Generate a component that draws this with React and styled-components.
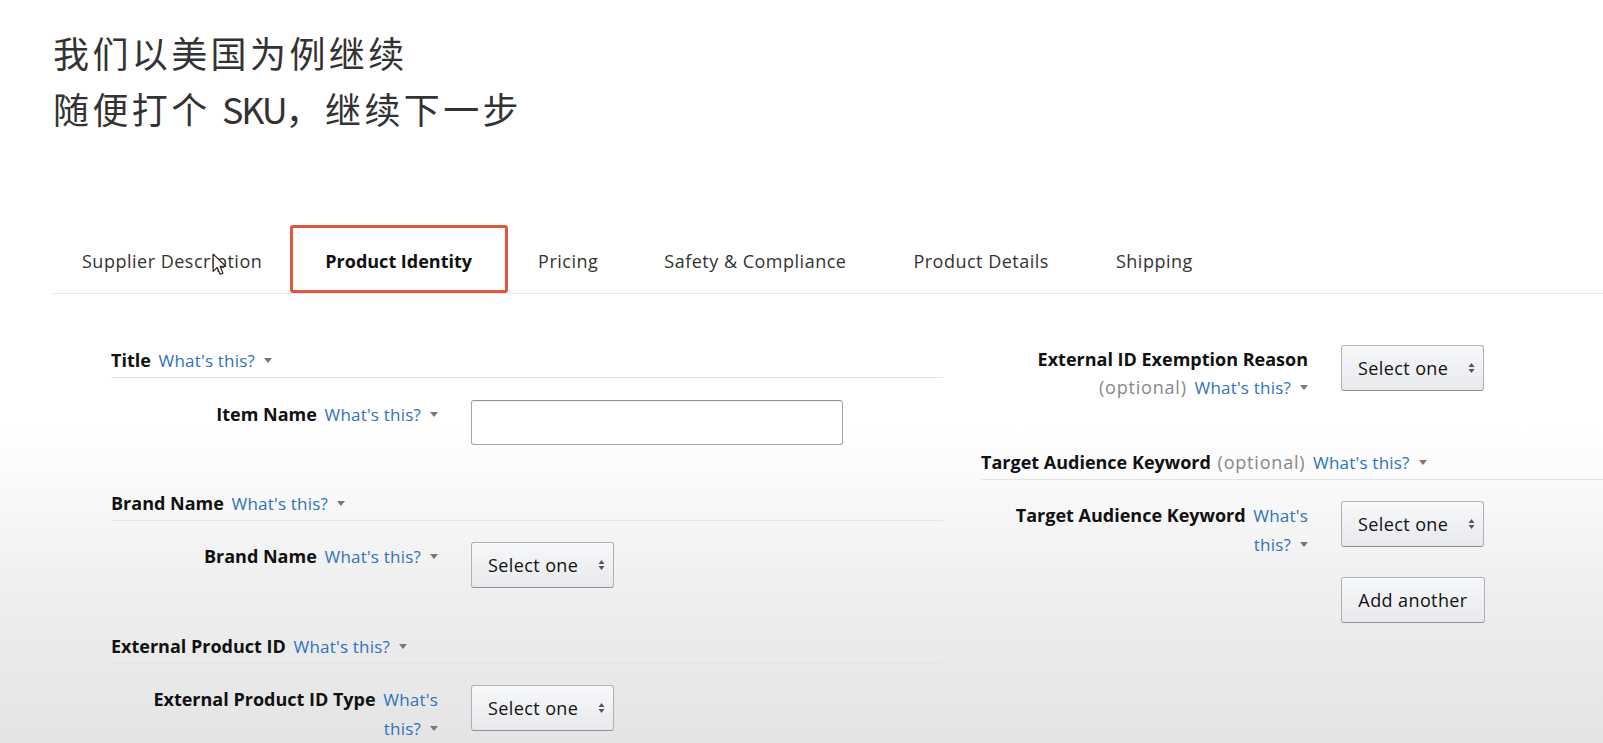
import React from 'react';
import styled, { createGlobalStyle } from 'styled-components';

const GlobalStyle = createGlobalStyle`
  html, body {
    margin: 0;
    padding: 0;
  }
  body {
    min-height: 743px;
    font-family: "Open Sans", "Liberation Sans", sans-serif;
    color: #222;
    background: linear-gradient(180deg, #ffffff 0px, #ffffff 430px, #eeeeee 600px, #e4e4e4 743px);
    overflow: hidden;
  }
`;

const Page = styled.div`
  position: relative;
  min-height: 743px;
  padding-left: 53px;
`;

const Caption = styled.div`
  padding-top: 24px;
  font-family: "Noto Sans CJK SC", "Noto Sans", sans-serif;
  font-size: 36px;
  line-height: 56px;
  letter-spacing: 3.4px;
  color: #333;
`;

const Latin = styled.span`
  letter-spacing: -2.2px;
`;

const TabBar = styled.div`
  display: flex;
  margin-top: 89px;
  border-bottom: 1px solid #e6e6e6;
`;

const Tab = styled.div`
  height: 68px;
  display: flex;
  align-items: center;
  padding: 4px ${(p) => p.$pad[1]}px 0 ${(p) => p.$pad[0]}px;
  border: 3px solid ${(p) => (p.$active ? '#e2563c' : 'transparent')};
  border-radius: 3px;
  box-sizing: border-box;
  font-size: 18px;
  font-weight: ${(p) => (p.$active ? 700 : 400)};
  color: ${(p) => (p.$active ? '#111' : '#333')};
  letter-spacing: ${(p) => (p.$active ? 0 : 0.5)}px;
  white-space: nowrap;
`;

const Form = styled.div`
  display: grid;
  grid-template-columns: 832px 1fr;
  column-gap: 38px;
  padding-left: 58px;
  margin-top: 51px;
`;

const Column = styled.div`
  display: flex;
  flex-direction: column;
  padding-top: ${(p) => p.$offset || 0}px;
`;

const SectionHeader = styled.div`
  font-size: 18px;
  line-height: 24px;
  padding-bottom: 4px;
  border-bottom: 1px solid #e4e4e4;
  margin-bottom: ${(p) => p.$mb || 21}px;
  white-space: nowrap;
`;

const Strong = styled.span`
  font-weight: 700;
  color: #111;
`;

const Optional = styled.span`
  color: #888;
  font-weight: 400;
  letter-spacing: 0.8px;
  margin-left: 2px;
`;

const HelpLink = styled.span`
  color: #2f72bd;
  font-size: 17px;
  font-weight: 400;
  letter-spacing: 0.2px;
  margin-left: 3px;
`;

const Caret = styled.svg`
  display: inline-block;
  width: 8px;
  height: 5px;
  margin-left: 9px;
  vertical-align: middle;
  position: relative;
  top: -2px;
`;

const Row = styled.div`
  display: flex;
  align-items: flex-start;
  gap: 33px;
  padding-left: 30px;
  margin-bottom: ${(p) => (p.$mb !== undefined ? p.$mb : 46)}px;
`;

const Label = styled.div`
  width: 297px;
  flex-shrink: 0;
  text-align: right;
  font-size: 18px;
  line-height: 28px;
  white-space: nowrap;
`;

const Controls = styled.div`
  display: flex;
  flex-direction: column;
  align-items: flex-start;
  gap: 30px;
`;

const TextInput = styled.input`
  width: 372px;
  height: 45px;
  box-sizing: border-box;
  border: 1px solid #a6a6a6;
  border-top-color: #949494;
  border-radius: 3px;
  box-shadow: inset 0 1px 0 rgba(0, 0, 0, 0.06);
  background: #fff;
  font-size: 16px;
  padding: 0 10px;
  outline: none;
`;

const Button = styled.button`
  height: 46px;
  width: ${(p) => p.$w || 143}px;
  box-sizing: border-box;
  display: flex;
  align-items: center;
  justify-content: ${(p) => (p.$center ? 'center' : 'flex-start')};
  gap: 20px;
  padding: 0 0 0 ${(p) => (p.$center ? 0 : 16)}px;
  border: 1px solid #adb1b8;
  border-bottom-color: #8d9096;
  border-radius: 3px;
  background: linear-gradient(180deg, #f7f8fa, #e7e9ec);
  box-shadow: 0 1px 0 rgba(255, 255, 255, 0.6) inset;
  font-family: "Open Sans", "Liberation Sans", sans-serif;
  font-size: 18px;
  color: #111;
  letter-spacing: 0.4px;
  cursor: pointer;
`;

const Cursor = styled.svg`
  position: absolute;
  left: 212px;
  top: 253px;
  width: 15px;
  height: 23px;
`;

const Help = ({ text = "What's this?" }) => (
  <>
    <HelpLink>{text}</HelpLink>
    <Caret viewBox="0 0 8 5">
      <path d="M0 0 L8 0 L4 5 Z" fill="#777" />
    </Caret>
  </>
);

const SortIcon = () => (
  <svg width="7" height="12" viewBox="0 0 7 12">
    <path d="M0.5 5 L3.5 1 L6.5 5 Z" fill="#555" />
    <path d="M0.5 7 L3.5 11 L6.5 7 Z" fill="#555" />
  </svg>
);

const SelectButton = () => (
  <Button type="button">
    Select one
    <SortIcon />
  </Button>
);

const tabs = [
  { name: 'Supplier Description', pad: [26, 25] },
  { name: 'Product Identity', pad: [32, 33], active: true },
  { name: 'Pricing', pad: [27, 31] },
  { name: 'Safety & Compliance', pad: [29, 32] },
  { name: 'Product Details', pad: [29, 32] },
  { name: 'Shipping', pad: [29, 29] },
];

export default function App() {
  return (
    <Page>
      <GlobalStyle />
      <Caption>
        <div>我们以美国为例继续</div>
        <div>
          随便打个 <Latin>SKU</Latin>，继续下一步
        </div>
      </Caption>

      <TabBar>
        {tabs.map((t) => (
          <Tab key={t.name} $pad={t.pad} $active={t.active}>
            {t.name}
          </Tab>
        ))}
      </TabBar>

      <Form>
        <Column $offset={3}>
          <SectionHeader $mb={22}>
            <Strong>Title</Strong> <Help />
          </SectionHeader>
          <Row>
            <Label>
              <Strong>Item Name</Strong> <Help />
            </Label>
            <TextInput type="text" />
          </Row>

          <SectionHeader>
            <Strong>Brand Name</Strong> <Help />
          </SectionHeader>
          <Row>
            <Label>
              <Strong>Brand Name</Strong> <Help />
            </Label>
            <SelectButton />
          </Row>

          <SectionHeader>
            <Strong>External Product ID</Strong> <Help />
          </SectionHeader>
          <Row $mb={0}>
            <Label>
              <Strong>External Product ID Type</Strong> <HelpLink>What's</HelpLink>
              <br />
              <Help text="this?" />
            </Label>
            <SelectButton />
          </Row>
        </Column>

        <Column>
          <Row $mb={48}>
            <Label>
              <Strong>External ID Exemption Reason</Strong>
              <br />
              <Optional>(optional)</Optional> <Help />
            </Label>
            <SelectButton />
          </Row>

          <SectionHeader>
            <Strong>Target Audience Keyword</Strong> <Optional>(optional)</Optional> <Help />
          </SectionHeader>
          <Row $mb={0}>
            <Label>
              <Strong>Target Audience Keyword</Strong> <HelpLink>What's</HelpLink>
              <br />
              <Help text="this?" />
            </Label>
            <Controls>
              <SelectButton />
              <Button type="button" $center $w={144}>
                Add another
              </Button>
            </Controls>
          </Row>
        </Column>
      </Form>

      <Cursor viewBox="0 0 13 20">
        <path
          d="M1 1 L1 16 L4.5 12.5 L7 18.5 L9.5 17.5 L7 11.5 L12 11.5 Z"
          fill="#fff"
          stroke="#222"
          strokeWidth="1"
          strokeLinejoin="round"
        />
      </Cursor>
    </Page>
  );
}
